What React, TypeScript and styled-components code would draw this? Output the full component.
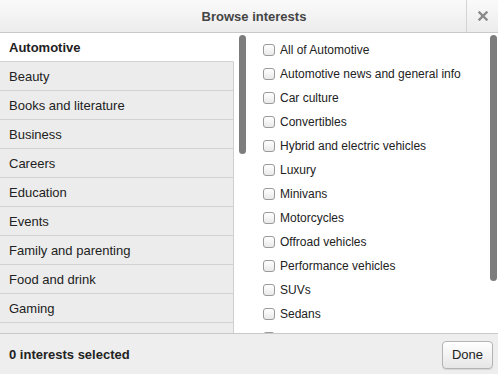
import React, { useState } from "react"
import styled, { createGlobalStyle } from "styled-components"

const GlobalStyle = createGlobalStyle`
  html, body {
    margin: 0;
    padding: 0;
    background: #fff;
  }
  body {
    font-family: "Liberation Sans", Arial, Helvetica, sans-serif;
    font-size: 13px;
    color: #222;
  }
`

const Dialog = styled.div`
  width: 498px;
  height: 374px;
  display: flex;
  flex-direction: column;
  overflow: hidden;
  background: #fff;
`

const Header = styled.div`
  height: 32px;
  flex: 0 0 32px;
  display: flex;
  align-items: stretch;
  background: linear-gradient(#fafafa, #ececec);
  border-bottom: 1px solid #c9c9c9;
`

const Title = styled.div`
  flex: 1;
  display: flex;
  align-items: center;
  justify-content: center;
  font-weight: bold;
  font-size: 13px;
  color: #444;
  padding-left: 42px;
`

const CloseButton = styled.button`
  width: 32px;
  border: none;
  border-left: 1px solid #d4d4d4;
  background: none;
  display: flex;
  align-items: center;
  justify-content: center;
  padding: 0;
  cursor: pointer;
`

const Body = styled.div`
  flex: 1;
  display: flex;
  min-height: 0;
`

const Pane = styled.div<{ width?: string; bg?: string }>`
  position: relative;
  width: ${({ width }) => width ?? 'auto'};
  flex: ${({ width }) => (width ? `0 0 ${width}` : '1')};
  background: ${({ bg }) => bg ?? '#fff'};
  overflow: hidden;
`

const CategoryRow = styled.div<{ active?: boolean }>`
  height: 28px;
  display: flex;
  align-items: center;
  padding-left: 9px;
  font-size: 13px;
  color: #222;
  font-weight: ${({ active }) => (active ? 'bold' : 'normal')};
  background: ${({ active }) => (active ? '#fff' : '#ececec')};
  border-bottom: 1px solid #d2d2d2;
  border-right: 1px solid ${({ active }) => (active ? 'transparent' : '#cfcfcf')};
  box-sizing: content-box;
  width: 224px;
  line-height: 1;
`

const Scrollbar = styled.div<{ top: number; height: number; right: number }>`
  position: absolute;
  top: ${({ top }) => top}px;
  right: ${({ right }) => right}px;
  width: 7px;
  height: ${({ height }) => height}px;
  border-radius: 4px;
  background: #7d7d7d;
`

const OptionList = styled.ul`
  list-style: none;
  margin: 0;
  padding: 4px 0 0 11px;
`

const OptionRow = styled.li`
  height: 24px;
  display: flex;
  align-items: center;
  font-size: 12px;
  color: #222;
  padding-top: 1px;
  box-sizing: border-box;
`

const Checkbox = styled.span`
  width: 10px;
  height: 10px;
  border: 1px solid #9a9a9a;
  border-radius: 3px;
  background: linear-gradient(#fff, #e9e9e9);
  margin-right: 5px;
  flex: 0 0 auto;
`

const Footer = styled.div`
  flex: 0 0 40px;
  height: 40px;
  display: flex;
  align-items: center;
  justify-content: space-between;
  padding: 0 5px 0 9px;
  background: #eeeeee;
  border-top: 1px solid #c9c9c9;
  box-shadow: 0 -3px 4px rgba(0, 0, 0, 0.05);
`

const Summary = styled.div`
  font-weight: bold;
  font-size: 13px;
  color: #222;
  padding-top: 1px;
`

const DoneButton = styled.button`
  height: 28px;
  width: 51px;
  font-family: inherit;
  font-size: 13px;
  color: #222;
  border: 1px solid #b4b4b4;
  border-radius: 4px;
  background: linear-gradient(#fff, #e6e6e6);
  box-shadow: 0 1px 1px rgba(0, 0, 0, 0.1);
  margin-top: 1px;
`

const categories = [
  'Automotive',
  'Beauty',
  'Books and literature',
  'Business',
  'Careers',
  'Education',
  'Events',
  'Family and parenting',
  'Food and drink',
  'Gaming',
  'Health',
]

const options = [
  'All of Automotive',
  'Automotive news and general info',
  'Car culture',
  'Convertibles',
  'Hybrid and electric vehicles',
  'Luxury',
  'Minivans',
  'Motorcycles',
  'Offroad vehicles',
  'Performance vehicles',
  'SUVs',
  'Sedans',
  'Trucks',
]

export default function App() {
  const [active] = useState('Automotive')

  return (
    <>
      <GlobalStyle />
      <Dialog>
        <Header>
          <Title>Browse interests</Title>
          <CloseButton>
            <svg width="10" height="10" viewBox="0 0 10 10">
              <path d="M1.5 1.5 L8.5 8.5 M8.5 1.5 L1.5 8.5" stroke="#8a8a8a" strokeWidth="2.4" strokeLinecap="square" />
            </svg>
          </CloseButton>
        </Header>
        <Body>
          <Pane width="252px">
            {categories.map((c) => (
              <CategoryRow key={c} active={c === active}>{c}</CategoryRow>
            ))}
            <Scrollbar top={2} height={119} right={6} />
          </Pane>
          <Pane>
            <OptionList>
              {options.map((o) => (
                <OptionRow key={o}>
                  <Checkbox />
                  {o}
                </OptionRow>
              ))}
            </OptionList>
            <Scrollbar top={2} height={246} right={1} />
          </Pane>
        </Body>
        <Footer>
          <Summary>0 interests selected</Summary>
          <DoneButton>Done</DoneButton>
        </Footer>
      </Dialog>
    </>
  )
}
